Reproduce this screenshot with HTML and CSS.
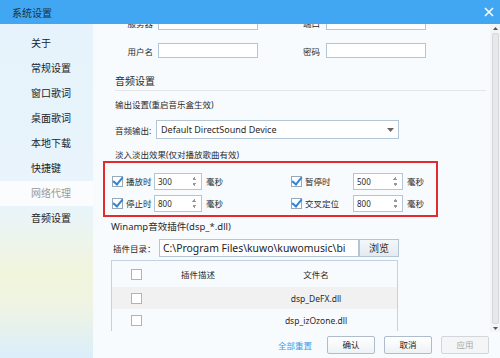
FILE: index.html
```html
<!DOCTYPE html>
<html lang="zh-CN">
<head>
    <meta charset="UTF-8">
    <title>系统设置</title>
    <link rel="stylesheet" href="styles.css">
</head>
<body>
    <div class="window">
        <!-- 标题栏 -->
        <div class="titlebar">
            <span class="title">系统设置</span>
            <svg class="close" width="10" height="10" viewBox="0 0 10 10">
                <path d="M1 1 L9 9 M9 1 L1 9" stroke="#fff" stroke-width="1.6" fill="none"/>
            </svg>
        </div>

        <div class="frame">
            <!-- 左侧菜单 -->
            <ul class="nav">
                <li>关于</li>
                <li>常规设置</li>
                <li>窗口歌词</li>
                <li>桌面歌词</li>
                <li>本地下载</li>
                <li>快捷键</li>
                <li class="active">网络代理</li>
                <li>音频设置</li>
            </ul>

            <div class="main">
                <div class="scroll-area">
                    <div class="content">
                        <div class="proxy-row">
                            <span class="lbl lbl-a">服务器</span>
                            <span class="field"></span>
                            <span class="lbl lbl-b">端口</span>
                            <span class="field"></span>
                        </div>
                        <div class="proxy-row">
                            <span class="lbl lbl-a">用户名</span>
                            <span class="field"></span>
                            <span class="lbl lbl-b">密码</span>
                            <span class="field"></span>
                        </div>

                        <h3 class="section-title">音频设置</h3>
                        <p class="note">输出设置(重启音乐盒生效)</p>

                        <div class="output-row">
                            <span class="out-lbl">音频输出:</span>
                            <div class="select">
                                <span>Default DirectSound Device</span>
                                <svg width="7" height="4" viewBox="0 0 7 4"><path d="M0 0 H7 L3.5 4 Z" fill="#666"/></svg>
                            </div>
                        </div>

                        <p class="note fade-note">淡入淡出效果(仅对播放歌曲有效)</p>

                        <div class="fade-box">
                            <div class="fade-item">
                                <span class="check on"></span>
                                <span class="fade-lbl">播放时</span>
                                <span class="spin">300</span>
                                <span class="unit">毫秒</span>
                            </div>
                            <div class="fade-item right">
                                <span class="check on"></span>
                                <span class="fade-lbl">暂停时</span>
                                <span class="spin">500</span>
                                <span class="unit">毫秒</span>
                            </div>
                            <div class="fade-item">
                                <span class="check on"></span>
                                <span class="fade-lbl">停止时</span>
                                <span class="spin">800</span>
                                <span class="unit">毫秒</span>
                            </div>
                            <div class="fade-item right">
                                <span class="check on"></span>
                                <span class="fade-lbl">交叉定位</span>
                                <span class="spin">800</span>
                                <span class="unit">毫秒</span>
                            </div>
                        </div>

                        <p class="plugin-title">Winamp音效插件(dsp_*.dll)</p>

                        <div class="dir-row">
                            <span class="dir-lbl">插件目录：</span>
                            <span class="dir-input">C:\Program Files\kuwo\kuwomusic\bi</span>
                            <span class="browse">浏览</span>
                        </div>

                        <table class="plugins">
                            <tr class="head">
                                <td class="c1"><span class="check"></span></td>
                                <td class="c2">插件描述</td>
                                <td class="c3">文件名</td>
                            </tr>
                            <tr class="odd">
                                <td class="c1"><span class="check"></span></td>
                                <td class="c2"></td>
                                <td class="c3">dsp_DeFX.dll</td>
                            </tr>
                            <tr>
                                <td class="c1"><span class="check"></span></td>
                                <td class="c2"></td>
                                <td class="c3">dsp_izOzone.dll</td>
                            </tr>
                        </table>
                    </div>

                    <!-- 滚动条 -->
                    <div class="scrollbar">
                        <svg width="5" height="3" viewBox="0 0 5 3"><path d="M0 3 H5 L2.5 0 Z" fill="#555"/></svg>
                        <div class="thumb"></div>
                        <svg width="5" height="3" viewBox="0 0 5 3"><path d="M0 0 H5 L2.5 3 Z" fill="#555"/></svg>
                    </div>
                </div>

                <div class="footer">
                    <span class="reset">全部重置</span>
                    <span class="btn">确认</span>
                    <span class="btn">取消</span>
                    <span class="btn disabled">应用</span>
                </div>
            </div>
        </div>
    </div>
</body>
</html>
```

FILE: styles.css
```css
body {
    margin: 0;
    font-family: "Noto Sans", "Noto Sans CJK SC", sans-serif;
    color: #333;
}

.window {
    width: 500px;
    height: 358px;
    display: flex;
    flex-direction: column;
    overflow: hidden;
    background: #f8fbfe;
}

.titlebar {
    height: 24px;
    flex: none;
    background: #42a7f2;
    display: flex;
    align-items: center;
    justify-content: space-between;
    padding: 0 6px 0 12px;
}

.title {
    font-size: 10px;
    color: #14324a;
}

.frame {
    flex: 1;
    display: flex;
    min-height: 0;
}

/* 左侧菜单 */
.nav {
    width: 93px;
    flex: none;
    margin: 0;
    padding: 7px 0 0 0;
    list-style: none;
    background: linear-gradient(180deg, #e6f3fc 0%, #e9f4fb 55%, #f1f5dc 75%, #eef4e4 85%, #dbeefb 100%);
}

.nav li {
    height: 25px;
    line-height: 25px;
    padding-left: 31px;
    font-size: 10px;
    color: #222;
}

.nav li.active {
    background: #fbfcfd;
    color: #9a9a9a;
}

.main {
    flex: 1;
    display: flex;
    flex-direction: column;
    min-width: 0;
}

.scroll-area {
    flex: 1;
    display: flex;
    min-height: 0;
    overflow: hidden;
}

.content {
    flex: 1;
    margin-top: -9px;
    font-size: 8.5px;
    white-space: nowrap;
    color: #2a2a2a;
}

/* 代理设置 (被滚动到上方) */
.proxy-row {
    display: flex;
    align-items: center;
    height: 15px;
    margin-bottom: 13px;
}

.lbl {
    text-align: right;
    padding-right: 5px;
    flex: none;
}

.lbl-a {
    width: 60px;
}

.lbl-b {
    width: 62px;
    padding-right: 6px;
}

.field {
    width: 98px;
    height: 13px;
    border: 1px solid #b3c6d8;
    background: #fff;
    flex: none;
}

.section-title {
    margin: 16px 4px 0 22px;
    height: 15px;
    line-height: 15px;
    font-size: 10px;
    font-weight: normal;
    border-bottom: 1.5px solid #e4e6e8;
    padding-bottom: 1px;
}

.note {
    margin: 6px 0 0 22px;
    line-height: 16px;
}

.output-row {
    display: flex;
    align-items: center;
    margin: 7px 0 0 22px;
}

.out-lbl {
    width: 41px;
    flex: none;
}

.select {
    width: 233px;
    height: 17px;
    border: 1px solid #b3c6d8;
    background: #fff;
    display: flex;
    align-items: center;
    justify-content: space-between;
    padding: 0 4px;
    flex: none;
    font-size: 9px;
}

.fade-note {
    margin-top: 10px;
    line-height: 12px;
}

/* 红色框 */
.fade-box {
    margin-left: 10px;
    width: 324px;
    border: 2px solid #e52a2d;
    padding: 10px 0 4px 7px;
    display: grid;
    grid-template-columns: 179px 1fr;
    row-gap: 6px;
}

.fade-item {
    display: flex;
    align-items: center;
    height: 16px;
}

.fade-lbl {
    flex: none;
    box-sizing: border-box;
    width: 31px;
    padding-left: 3px;
}

.right .fade-lbl {
    width: 51px;
}

.spin {
    position: relative;
    flex: none;
    width: 43px;
    height: 15px;
    line-height: 15px;
    padding-left: 3px;
    border: 1px solid #b3c6d8;
    background: #fff;
    font-size: 8px;
}

.spin::after {
    content: "";
    position: absolute;
    right: 4px;
    top: 3px;
    width: 5px;
    height: 9px;
    background:
        linear-gradient(135deg, transparent 50%, #999 50%) 0 0 / 3px 3px no-repeat,
        linear-gradient(225deg, transparent 50%, #999 50%) 2px 0 / 3px 3px no-repeat,
        linear-gradient(45deg, transparent 50%, #999 50%) 0 6px / 3px 3px no-repeat,
        linear-gradient(315deg, transparent 50%, #999 50%) 2px 6px / 3px 3px no-repeat;
}

.right .spin {
    width: 45px;
}

.unit {
    padding-left: 4px;
}

.check {
    position: relative;
    display: inline-block;
    width: 9px;
    height: 9px;
    border: 1px solid #9aa8b6;
    background: #fff;
    flex: none;
}

.check.on::after {
    content: "";
    position: absolute;
    left: 2px;
    top: -2px;
    width: 4px;
    height: 8px;
    border: solid #2f85d6;
    border-width: 0 2px 2px 0;
    transform: rotate(40deg);
}

.plugin-title {
    margin: 3px 0 0 18px;
    line-height: 14px;
    font-size: 9.5px;
}

.dir-row {
    display: flex;
    align-items: center;
    margin: 5px 0 0 20px;
    height: 18px;
}

.dir-lbl {
    width: 46px;
    flex: none;
}

.dir-input {
    flex: none;
    width: 195px;
    height: 16px;
    line-height: 16px;
    padding-left: 3px;
    border: 1px solid #b3c6d8;
    background: #fff;
    font-size: 10.4px;
    overflow: hidden;
    color: #222;
}

.browse {
    flex: none;
    width: 38px;
    height: 16px;
    line-height: 16px;
    text-align: center;
    border: 1px solid #b3c6d8;
    background: linear-gradient(#f4f7fa, #e4eaf0);
    font-size: 10px;
}

/* 插件表格 */
.plugins {
    margin: 3px 0 0 18px;
    width: 287px;
    border-collapse: collapse;
    border: 1px solid #c5d1de;
    border-bottom: none;
    font-size: 8.5px;
}

.plugins td {
    padding: 0;
    text-align: center;
    height: 22px;
}

.plugins .head td {
    height: 26px;
}

.plugins tr.odd {
    background: #f1f1f1;
}

.plugins .c1 {
    width: 49px;
}

.plugins .c2 {
    width: 74px;
}

.plugins .check {
    vertical-align: middle;
    border-color: #aab4be;
}

/* 滚动条 */
.scrollbar {
    width: 10px;
    flex: none;
    background: #f2f4f6;
    display: flex;
    flex-direction: column;
    align-items: center;
    padding: 3px 0 2px;
    gap: 3px;
}

.thumb {
    flex: 1;
    width: 7px;
    border: 1px solid #d6d9dc;
    border-radius: 2px;
    background: #e6e8ea;
    box-sizing: border-box;
}

.footer {
    height: 26px;
    flex: none;
    display: flex;
    align-items: center;
    justify-content: flex-end;
    gap: 9px;
    padding-right: 11px;
    font-size: 8.5px;
}

.reset {
    flex: none;
    color: #3a9de6;
    margin-right: 6px;
}

.btn {
    flex: none;
    width: 46px;
    height: 16px;
    line-height: 16px;
    text-align: center;
    border: 1px solid #aebccb;
    border-radius: 2px;
    background: linear-gradient(#ffffff, #eef2f6);
    color: #222;
}

.btn.disabled {
    border-color: #d2d6da;
    background: #f4f5f6;
    color: #aaa;
}
```
